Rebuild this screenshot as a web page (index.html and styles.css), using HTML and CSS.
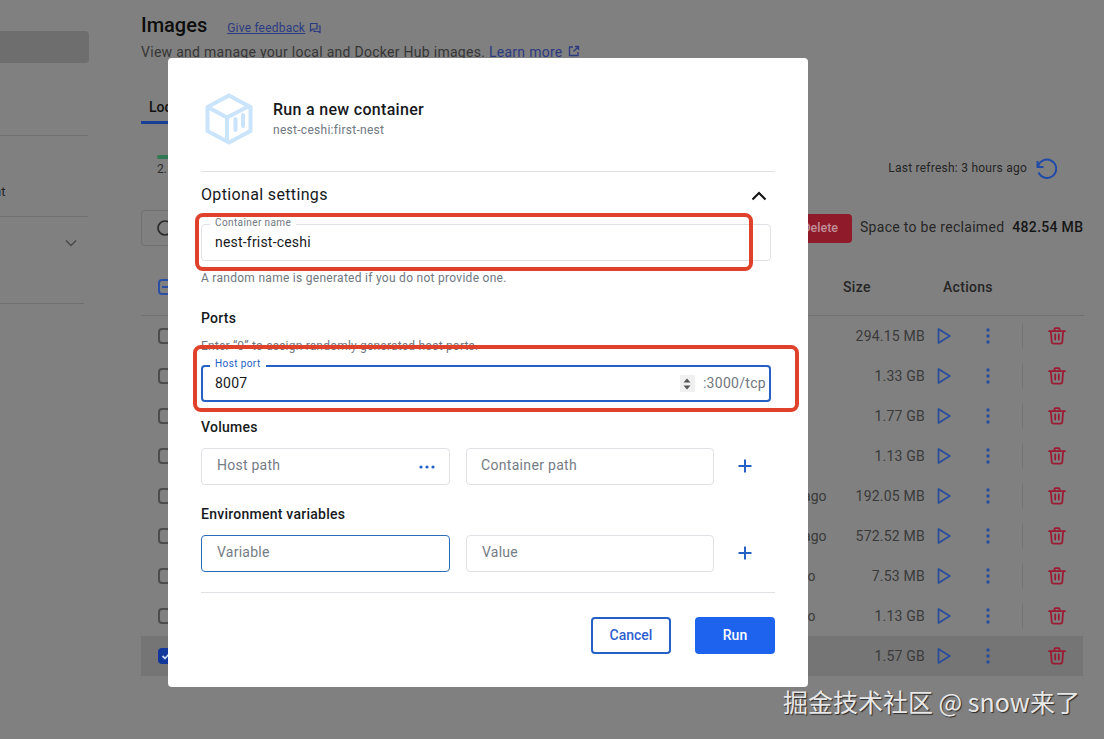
FILE: index.html
```html
<!DOCTYPE html>
<html lang="en">
<head>
<meta charset="utf-8">
<title>Images</title>
<link rel="stylesheet" href="styles.css">
</head>
<body>
<svg class="defs" aria-hidden="true">
  <symbol id="play" viewBox="0 0 14 20"><path d="M1.5 3 L12.8 10 L1.5 17 Z" fill="none" stroke="currentColor" stroke-width="1.8" stroke-linejoin="round"/></symbol>
  <symbol id="dots" viewBox="0 0 6 18"><circle cx="3" cy="3" r="1.8"/><circle cx="3" cy="9" r="1.8"/><circle cx="3" cy="15" r="1.8"/></symbol>
  <symbol id="trash" viewBox="0 0 18 18"><path d="M1 4.2 H17 M6.5 3.8 V1.8 Q6.5 1.2 7.1 1.2 H10.9 Q11.5 1.2 11.5 1.8 V3.8 M2.8 4.2 L3.7 14.8 Q3.9 16.6 5.6 16.6 H12.4 Q14.1 16.6 14.3 14.8 L15.2 4.2 M7.2 7.5 V12.5 M10.8 7.5 V12.5" fill="none" stroke="currentColor" stroke-width="1.8" stroke-linecap="round"/></symbol>
</svg>
<div class="app">
  <aside class="sidebar">
    <div class="side-active"></div>
    <div class="side-rule side-rule-first"></div>
    <div class="side-text">nt</div>
    <div class="side-rule side-rule-second"></div>
    <div class="side-ext"><svg class="side-chevron" viewBox="0 0 12 8"><path d="M1 1.5 L6 6.5 L11 1.5" fill="none" stroke="currentColor" stroke-width="1.5"/></svg></div>
    <div class="side-rule side-rule-third"></div>
  </aside>
  <main class="main">
    <div class="title-row">
      <h1 class="title">Images</h1>
      <a class="feedback">Give feedback</a>
      <svg class="feedback-icon" viewBox="0 0 12 12"><path d="M1 1.5 H8 V7 H4 L1.5 9 V1.5 Z M9.5 4 H11 V10.5 L9 9.5 H5 V8" fill="none" stroke="currentColor" stroke-width="1.2"/></svg>
    </div>
    <p class="subtitle">View and manage your local and Docker Hub images. <a class="learn">Learn more</a>
      <svg class="learn-icon" viewBox="0 0 12 12"><path d="M5 2 H1.5 V10.5 H10 V7 M7 1.5 H10.5 V5 M10.5 1.5 L5.5 6.5" fill="none" stroke="currentColor" stroke-width="1.3"/></svg>
    </p>
    <div class="tabs"><div class="tab">Local</div></div>
    <div class="stats">
      <div class="usage"><div class="usage-bar"></div><div class="usage-text">2.5 GB / 5 GB</div></div>
      <div class="refresh">
        <span>Last refresh: 3 hours ago</span>
        <svg class="refresh-icon" viewBox="0 0 24 24"><path d="M4.5 5 V11 H10.5 M5 11 A9.2 9.2 0 1 1 5.6 16.5" fill="none" stroke="currentColor" stroke-width="1.9"/></svg>
      </div>
    </div>
    <div class="toolbar">
      <div class="search"><svg class="search-icon" viewBox="0 0 20 20"><circle cx="9" cy="9" r="7" fill="none" stroke="currentColor" stroke-width="1.7"/><path d="M14 14 L19 19" stroke="currentColor" stroke-width="1.7"/></svg></div>
      <button class="delete">Delete</button>
      <span class="reclaim">Space to be reclaimed</span>
      <strong class="reclaim-size">482.54 MB</strong>
    </div>
    <div class="table-head">
      <div class="head-check"><span class="check check-minus"></span></div>
      <div>Size</div>
      <div>Actions</div>
    </div>
    <div class="row"><div class="cell-check"><span class="check"></span></div><div class="when">3 hours</div><div class="size">294.15 MB</div><svg class="ico play"><use href="#play"/></svg><svg class="ico dots"><use href="#dots"/></svg><span class="divider"></span><svg class="ico trash"><use href="#trash"/></svg></div>
    <div class="row"><div class="cell-check"><span class="check"></span></div><div class="when">3 hours</div><div class="size">1.33 GB</div><svg class="ico play"><use href="#play"/></svg><svg class="ico dots"><use href="#dots"/></svg><span class="divider"></span><svg class="ico trash"><use href="#trash"/></svg></div>
    <div class="row"><div class="cell-check"><span class="check"></span></div><div class="when">5 hours</div><div class="size">1.77 GB</div><svg class="ico play"><use href="#play"/></svg><svg class="ico dots"><use href="#dots"/></svg><span class="divider"></span><svg class="ico trash"><use href="#trash"/></svg></div>
    <div class="row"><div class="cell-check"><span class="check"></span></div><div class="when">5 hours</div><div class="size">1.13 GB</div><svg class="ico play"><use href="#play"/></svg><svg class="ico dots"><use href="#dots"/></svg><span class="divider"></span><svg class="ico trash"><use href="#trash"/></svg></div>
    <div class="row"><div class="cell-check"><span class="check"></span></div><div class="when">1 month ago</div><div class="size">192.05 MB</div><svg class="ico play"><use href="#play"/></svg><svg class="ico dots"><use href="#dots"/></svg><span class="divider"></span><svg class="ico trash"><use href="#trash"/></svg></div>
    <div class="row"><div class="cell-check"><span class="check"></span></div><div class="when">1 month ago</div><div class="size">572.52 MB</div><svg class="ico play"><use href="#play"/></svg><svg class="ico dots"><use href="#dots"/></svg><span class="divider"></span><svg class="ico trash"><use href="#trash"/></svg></div>
    <div class="row"><div class="cell-check"><span class="check"></span></div><div class="when">2 days ago</div><div class="size">7.53 MB</div><svg class="ico play"><use href="#play"/></svg><svg class="ico dots"><use href="#dots"/></svg><span class="divider"></span><svg class="ico trash"><use href="#trash"/></svg></div>
    <div class="row"><div class="cell-check"><span class="check"></span></div><div class="when">2 days ago</div><div class="size">1.13 GB</div><svg class="ico play"><use href="#play"/></svg><svg class="ico dots"><use href="#dots"/></svg><span class="divider"></span><svg class="ico trash"><use href="#trash"/></svg></div>
    <div class="row row-selected"><div class="cell-check"><span class="check check-on"><svg viewBox="0 0 12 12"><path d="M2.5 6 L5 8.5 L9.5 3.5" fill="none" stroke="#c9d6f2" stroke-width="1.8"/></svg></span></div><div class="when">1 day ago</div><div class="size">1.57 GB</div><svg class="ico play"><use href="#play"/></svg><svg class="ico dots"><use href="#dots"/></svg><span class="divider"></span><svg class="ico trash"><use href="#trash"/></svg></div>
  </main>
</div>

<section class="dialog">
  <header class="dlg-head">
    <svg class="cube" viewBox="0 0 48 52">
      <path d="M24 2.5 L45.5 14 V38 L24 49.5 L2.5 38 V14 Z M3.5 14.5 L22 24.5 V49 M22 24.5 L45 12.5" fill="none" stroke="#c9e4fb" stroke-width="4" stroke-linejoin="round"/>
      <path d="M30.5 26 V37 M38 22 V33" fill="none" stroke="#c9e4fb" stroke-width="4" stroke-linecap="round"/>
    </svg>
    <div>
      <div class="dlg-title">Run a new container</div>
      <div class="dlg-sub">nest-ceshi:first-nest</div>
    </div>
  </header>
  <div class="rule"></div>
  <div class="optional">
    <span>Optional settings</span>
    <svg class="chev-up" viewBox="0 0 16 10"><path d="M1.5 8.5 L8 2 L14.5 8.5" fill="none" stroke="currentColor" stroke-width="2"/></svg>
  </div>
  <div class="field field-name">
    <span class="float-label">Container name</span>
    <span class="field-value">nest-frist-ceshi</span>
  </div>
  <p class="help help-name">A random name is generated if you do not provide one.</p>
  <h2 class="section section-ports">Ports</h2>
  <p class="help help-ports">Enter “0” to assign randomly generated host ports.</p>
  <div class="field field-port">
    <span class="float-label float-label-blue">Host port</span>
    <span class="field-value">8007</span>
    <span class="spin"><svg viewBox="0 0 8 12"><path d="M4 0.5 L7.5 4.5 H0.5 Z M4 11.5 L0.5 7.5 H7.5 Z" fill="#555"/></svg></span>
    <span class="suffix">:3000/tcp</span>
  </div>
  <h2 class="section section-vol">Volumes</h2>
  <div class="pair">
    <div class="input input-host"><span>Host path</span><svg class="more" viewBox="0 0 16 4"><circle cx="2" cy="2" r="1.6"/><circle cx="8" cy="2" r="1.6"/><circle cx="14" cy="2" r="1.6"/></svg></div>
    <div class="input input-wide"><span>Container path</span></div>
    <svg class="plus" viewBox="0 0 14 14"><path d="M7 0.5 V13.5 M0.5 7 H13.5" stroke="currentColor" stroke-width="2"/></svg>
  </div>
  <h2 class="section section-env">Environment variables</h2>
  <div class="pair">
    <div class="input input-focus"><span>Variable</span></div>
    <div class="input"><span>Value</span></div>
    <svg class="plus" viewBox="0 0 14 14"><path d="M7 0.5 V13.5 M0.5 7 H13.5" stroke="currentColor" stroke-width="2"/></svg>
  </div>
  <div class="rule rule-foot"></div>
  <footer class="actions">
    <button class="btn btn-cancel">Cancel</button>
    <button class="btn btn-run">Run</button>
  </footer>
</section>

<div class="mark mark-name"></div>
<div class="mark mark-port"></div>
<div class="watermark">掘金技术社区 @ snow来了</div>
</body>
</html>
```
FILE: styles.css
```css
* { box-sizing: border-box; }
html, body { margin: 0; height: 100%; }
body {
  position: relative;
  width: 1104px;
  height: 739px;
  overflow: hidden;
  background: #808080;
  font-family: Roboto, "Liberation Sans", sans-serif;
  color: #1a1a1a;
}
.defs { position: absolute; width: 0; height: 0; }
p, h1, h2 { margin: 0; font-weight: normal; }
button { font-family: inherit; border: 0; padding: 0; }

/* background app */
.app { display: flex; height: 739px; }
.sidebar { width: 141px; flex: none; padding-top: 31px; }
.side-active { width: 89px; height: 32px; background: #6e6e6e; border-radius: 0 4px 4px 0; }
.side-rule { width: 88px; height: 1px; background: #707070; }
.side-rule-first { margin-top: 72px; }
.side-text { height: 80px; margin-left: -6px; font-size: 13px; line-height: 111px; color: #222; }
.side-ext { height: 86px; width: 88px; padding: 22px 0 0 65px; color: #4a4a4a; }
.side-chevron { display: block; width: 12px; height: 8px; }
.side-rule-third { width: 84px; }

.main { width: 942px; flex: none; padding-top: 13px; }
.title-row { display: flex; align-items: center; height: 24px; }
.title { font-size: 20px; font-weight: 500; line-height: 24px; color: #0d0d0d; }
.feedback { margin-left: 20px; margin-top: 5px; font-size: 12px; letter-spacing: .2px; color: #2c3a80; text-decoration: underline; }
.feedback-icon { width: 12px; height: 12px; margin: 6px 0 0 4px; color: #2c3a80; }
.subtitle { margin-top: 5px; font-size: 14px; line-height: 20px; color: #363636; letter-spacing: .28px; white-space: nowrap; }
.learn { color: #2c3a80; }
.learn-icon { width: 12px; height: 12px; margin-left: 2px; color: #2c3a80; }
.tabs { margin-top: 35px; height: 27px; }
.tab { width: 80px; height: 27px; padding-left: 8px; font-size: 14px; font-weight: 500; line-height: 20px; color: #111; border-bottom: 3px solid #1a3f96; }
.stats { display: flex; justify-content: space-between; height: 25px; margin-top: 31px; }
.usage { padding: 0 0 0 16px; }
.usage-bar { width: 60px; height: 4px; background: #2f7a55; border-radius: 2px; }
.usage-text { margin-top: 2px; font-size: 12px; line-height: 16px; color: #2b2b2b; }
.refresh { display: flex; align-items: center; height: 25px; font-size: 12px; letter-spacing: .24px; color: #242424; }
.refresh-icon { width: 24px; height: 24px; margin: 0 26px 0 6px; color: #1f4aa8; }
.toolbar { display: flex; align-items: center; height: 36px; margin-top: 30px; font-size: 14px; white-space: nowrap; }
.search { flex: none; width: 600px; height: 36px; padding: 8px 0 0 14px; border: 1px solid #707070; border-radius: 4px; }
.search-icon { display: block; width: 20px; height: 20px; color: #2a2a2a; }
.delete { flex: none; width: 81px; height: 29px; margin-left: 30px; padding: 0 14px 2px 0; text-align: right; background: #8f1a2a; border-radius: 4px; color: #c08f98; font-size: 12.5px; font-weight: 500; }
.reclaim { margin: 0 0 2px 8px; color: #262626; letter-spacing: .3px; }
.reclaim-size { margin: 0 0 2px 8px; font-weight: 500; color: #161616; letter-spacing: .3px; }
.table-head { display: grid; grid-template-columns: 702px 100px 1fr; align-items: center; width: 943px; height: 47px; margin-top: 23px; padding-bottom: 10px; border-bottom: 1px solid #707070; font-size: 14px; font-weight: 500; letter-spacing: .3px; color: #262626; }
.head-check { padding-left: 17px; display: flex; }
.row { display: grid; grid-template-columns: 607px 90px 87px 38px 50px 18px 52px; align-items: center; justify-items: center; height: 40px; font-size: 14px; color: #3a3a3a; white-space: nowrap; }
.row-selected { background: #757575; }
.cell-check { justify-self: start; padding-left: 17px; display: flex; }
.check { position: relative; display: block; width: 16px; height: 16px; border: 2px solid #4c4c4c; border-radius: 4px; }
.check svg { display: block; width: 12px; height: 12px; }
.check-minus { border-color: #2a4fa3; }
.check-minus::after { content: ""; position: absolute; left: 2px; right: 2px; top: 5px; height: 2px; background: #2a4fa3; }
.check-on { background: #12389c; border-color: #12389c; }
.when { justify-self: start; padding-bottom: 1px; }
.size { justify-self: end; padding-bottom: 1px; letter-spacing: .22px; }
.ico { display: block; }
.play { width: 14px; height: 20px; color: #2a4e9c; }
.dots { width: 6px; height: 18px; fill: #2a4e9c; }
.divider { width: 1px; height: 24px; background: #747474; }
.trash { width: 18px; height: 18px; color: #9a1c34; }

/* dialog */
.dialog {
  position: absolute;
  left: 168px;
  top: 58px;
  width: 640px;
  height: 629px;
  padding: 35px 33px 0;
  background: #fff;
  border-radius: 4px;
}
.dlg-head { display: flex; align-items: center; height: 52px; padding-left: 4px; }
.cube { width: 48px; height: 52px; margin-right: 20px; }
.dlg-title { font-size: 16px; font-weight: 500; line-height: 20px; letter-spacing: .3px; color: #17191c; }
.dlg-sub { margin-top: 2px; font-size: 12px; line-height: 16px; letter-spacing: .28px; color: #6f7780; }
.rule { height: 1px; background: #dfe1e4; width: 574px; margin-top: 26px; }
.optional { display: flex; align-items: center; justify-content: space-between; height: 24px; margin-top: 10px; padding-right: 8px; font-size: 16px; letter-spacing: .35px; color: #17191c; }
.chev-up { width: 16px; height: 10px; margin-top: 3px; color: #111; }
.field { position: relative; display: flex; align-items: center; width: 570px; height: 37px; padding: 0 3px 2px 13px; border: 1px solid #dfe1e4; border-radius: 4px; font-size: 14px; color: #17191c; }
.field-name { margin-top: 18px; }
.field-port { margin-top: 16px; border: 2px solid #2560c4; padding-left: 12px; }
.field-value { flex: 1; letter-spacing: .2px; }
.float-label { position: absolute; left: 8px; top: -8px; padding: 0 5px; background: #fff; font-size: 10px; line-height: 12px; color: #6f7780; letter-spacing: .4px; }
.float-label-blue { left: 7px; top: -9px; color: #2560c4; }
.help { font-size: 12px; line-height: 16px; color: #6f7780; letter-spacing: .28px; }
.help-name { margin-top: 9px; }
.section { font-size: 14px; font-weight: 500; line-height: 18px; color: #17191c; letter-spacing: .25px; }
.section-ports { margin-top: 23px; }
.help-ports { margin-top: 11px; height: 11px; font-size: 12px; letter-spacing: .19px; }
.spin { display: flex; align-items: center; justify-content: center; width: 15px; height: 17px; background: #f0f0f0; margin: 2px 8px 0 0; }
.spin svg { width: 8px; height: 12px; }
.suffix { color: #6f7780; letter-spacing: .3px; }
.section-vol { margin-top: 16px; }
.section-env { margin-top: 20px; }
.pair { display: flex; align-items: center; margin-top: 12px; }
.input { display: flex; align-items: center; justify-content: space-between; width: 248px; height: 37px; margin-right: 16px; padding: 0 15px 3px 15px; border: 1px solid #dfe1e4; border-radius: 4px; font-size: 14px; color: #757c85; letter-spacing: .25px; }
.input-host { width: 249px; padding-right: 14px; }
.input-wide { padding-left: 14px; letter-spacing: .32px; }
.input-focus { width: 249px; border-color: #2a6db5; }
.more { width: 16px; height: 4px; fill: #2560c4; margin: 3px 0 0 0; }
.plus { width: 14px; height: 14px; margin: 0 0 2px 8px; color: #2560c4; }
.rule-foot { margin-top: 20px; }
.actions { display: flex; justify-content: flex-end; gap: 24px; margin-top: 24px; width: 574px; }
.btn { width: 80px; height: 37px; padding-bottom: 2px; border-radius: 4px; font-size: 14px; font-weight: 500; }
.btn-cancel { background: #fff; border: 2px solid #2560c4; color: #2f5fd0; }
.btn-run { background: #1d63ed; color: #fff; }

/* annotations */
.mark { position: absolute; border: 4px solid #e0412a; border-radius: 8px; }
.mark-name { left: 195px; top: 213px; width: 558px; height: 58px; }
.mark-port { left: 193px; top: 345px; width: 606px; height: 67px; }
.watermark {
  position: absolute;
  left: 783px;
  top: 684px;
  font-family: "Noto Sans CJK SC", "Noto Sans", sans-serif;
  font-size: 25px;
  line-height: 34px;
  color: #e8e8e8;
  text-shadow: 1px 1px 1px #2a2a2a;
  white-space: nowrap;
}
```
